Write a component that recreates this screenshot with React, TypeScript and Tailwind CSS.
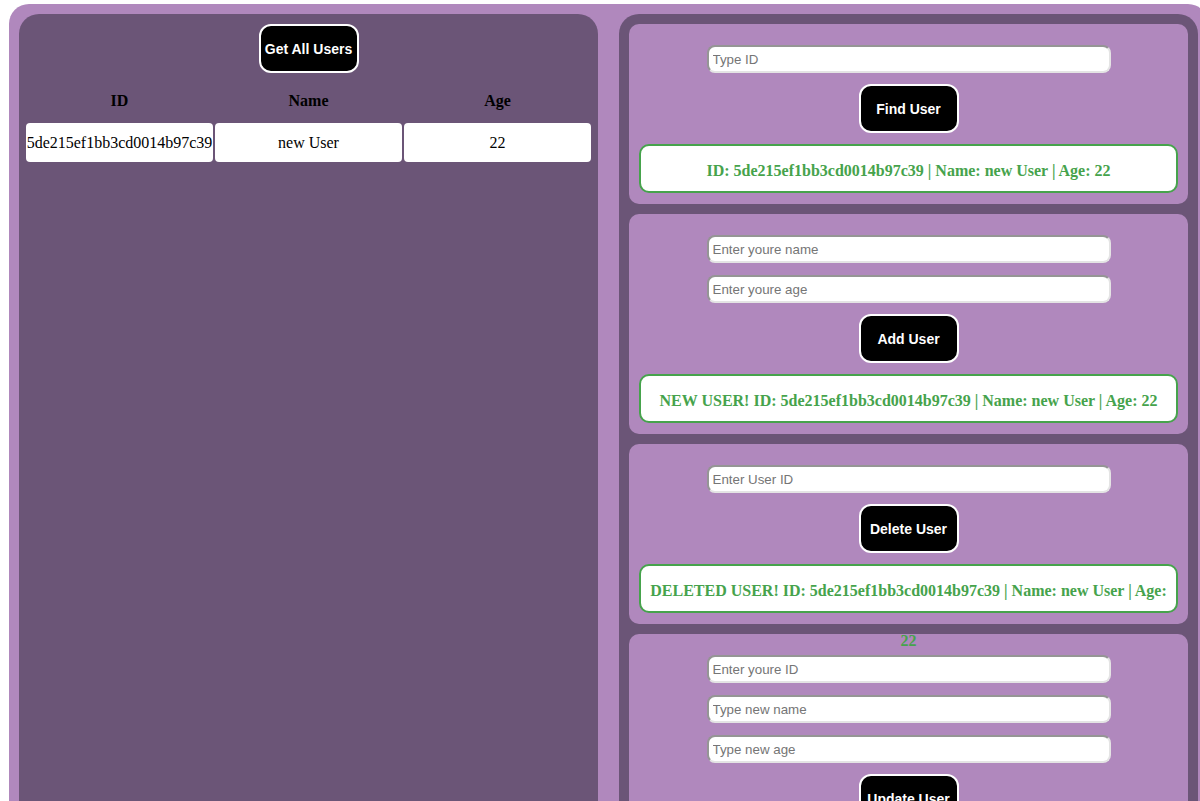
import React from "react";

const serif = { fontFamily: '"Liberation Serif", "Times New Roman", serif' };
const sans = { fontFamily: '"Liberation Sans", Arial, sans-serif' };

function Btn({ label }: { label: string }) {
  return (
    <button
      className="w-[100px] h-[49px] shrink-0 bg-black text-white font-bold text-[14px] border-2 border-white rounded-[12px] pt-[1px]"
      style={sans}
    >
      {label}
    </button>
  );
}

function Field({ ph }: { ph: string }) {
  return (
    <input
      placeholder={ph}
      className="w-[404px] h-[28px] shrink-0 bg-white rounded-[8px] border-2 border-t-[#959595] border-l-[#959595] border-b-[#e4e4e4] border-r-[#e4e4e4] px-[4px] text-[13.33px] text-black placeholder:text-[#757575] outline-none"
      style={sans}
    />
  );
}

function Fields({ children }: { children: React.ReactNode }) {
  return <div className="flex flex-col items-center gap-[12px]">{children}</div>;
}

function Result({ text }: { text: string }) {
  return (
    <div
      className="w-[539px] h-[49px] shrink-0 bg-white border-2 border-[#46a34c] rounded-[10px] text-center text-[#46a34c] font-bold text-[16px] leading-[50px] px-0 overflow-visible"
      style={serif}
    >
      {text}
    </div>
  );
}

function Card({ children }: { children: React.ReactNode }) {
  return (
    <div className="bg-[#b088bd] rounded-[10px] flex flex-col items-center gap-[11px] pt-[21px] pb-[11px] px-[10px]">
      {children}
    </div>
  );
}

export default function App() {
  const info = "ID: 5de215ef1bb3cd0014b97c39 | Name: new User | Age: 22";
  return (
    <div className="w-[1200px] h-[801px] overflow-hidden bg-white">
      <div className="ml-[9px] mt-[4px] w-[1199px] h-[900px] bg-[#b088bd] rounded-[20px] p-[10px] grid grid-cols-2 gap-[21px]">
        <div className="bg-[#6b5577] rounded-[20px] flex flex-col items-center pt-[10px]">
          <Btn label="Get All Users" />
          <table
            className="mt-[7px] w-[569px] table-fixed border-separate border-spacing-[2px] text-[16px] text-black"
            style={serif}
          >
            <thead>
              <tr>
                <th className="h-[39px] font-bold pb-[2px]">ID</th>
                <th className="h-[39px] font-bold pb-[2px]">Name</th>
                <th className="h-[39px] font-bold pb-[2px]">Age</th>
              </tr>
            </thead>
            <tbody>
              <tr>
                <td className="h-[39px] bg-white rounded-[4px] text-center whitespace-nowrap">5de215ef1bb3cd0014b97c39</td>
                <td className="h-[39px] bg-white rounded-[4px] text-center">new User</td>
                <td className="h-[39px] bg-white rounded-[4px] text-center">22</td>
              </tr>
            </tbody>
          </table>
        </div>
        <div className="bg-[#6b5577] rounded-[20px] p-[10px] flex flex-col gap-[10px]">
          <Card>
            <Field ph="Type ID" />
            <Btn label="Find User" />
            <Result text={info} />
          </Card>
          <Card>
            <Fields>
              <Field ph="Enter youre name" />
              <Field ph="Enter youre age" />
            </Fields>
            <Btn label="Add User" />
            <Result text={"NEW USER! " + info} />
          </Card>
          <Card>
            <Field ph="Enter User ID" />
            <Btn label="Delete User" />
            <div className="relative z-10 flex">
              <Result text={"DELETED USER! " + info} />
            </div>
          </Card>
          <Card>
            <Fields>
              <Field ph="Enter youre ID" />
              <Field ph="Type new name" />
              <Field ph="Type new age" />
            </Fields>
            <Btn label="Update User" />
          </Card>
        </div>
      </div>
    </div>
  );
}
